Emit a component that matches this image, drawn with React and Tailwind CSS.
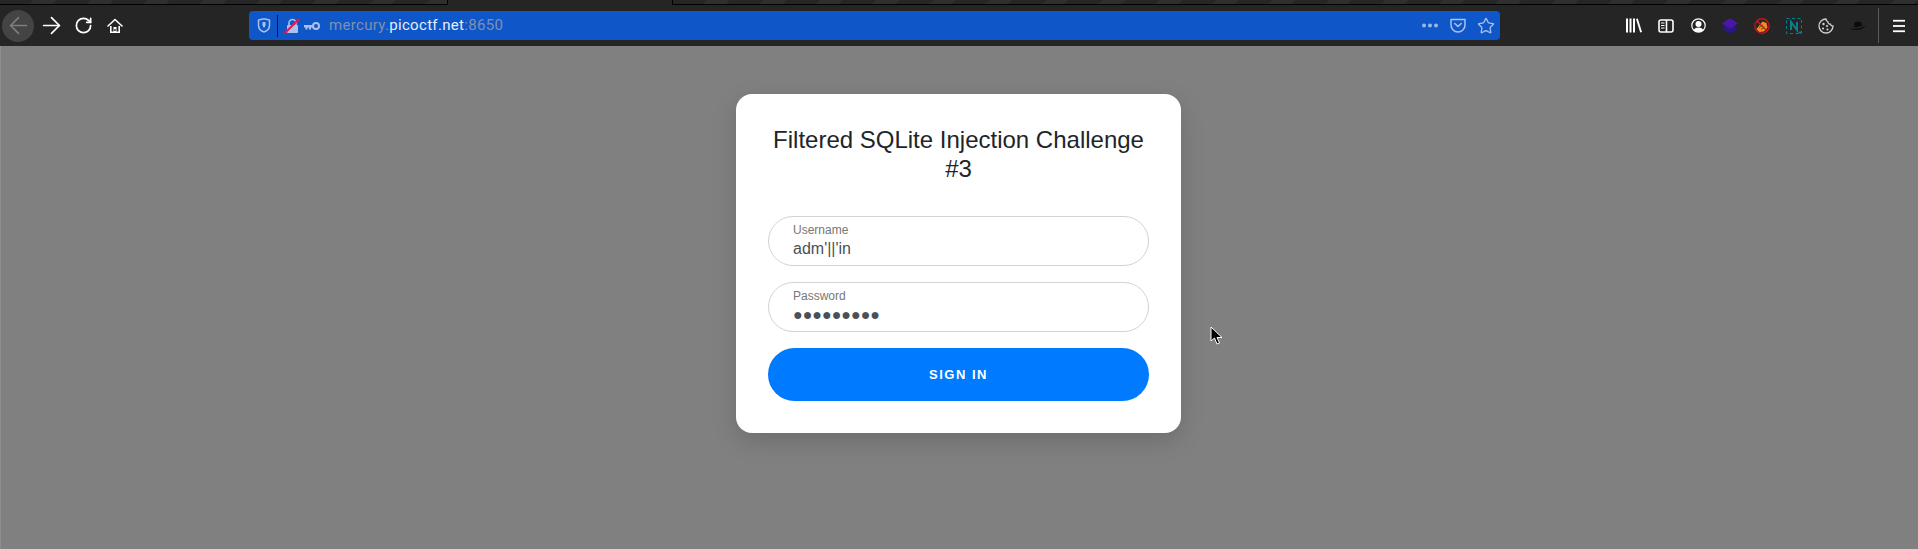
import React from 'react';
import { ArrowLeft, ArrowRight, RotateCw, Star, Menu } from 'lucide-react';

function ToolbarIcon({ children }) {
  return <div className="flex h-8 w-8 items-center justify-center">{children}</div>;
}

function Home() {
  return (
    <svg width="16" height="16" viewBox="0 0 16 16" fill="none">
      <path d="M1 8 8 1.500 15 8" stroke="#fff" strokeWidth="1.600" strokeLinecap="round" strokeLinejoin="round" />
      <path d="M3.800 8v6.200h8.400V8" stroke="#fff" strokeWidth="1.600" />
      <path d="M6.500 14.500V9h3v5.500z" fill="#fff" />
      <rect x="7.300" y="11" width="1.400" height="2" fill="#252525" />
    </svg>
  );
}

function Shield() {
  return (
    <svg width="14" height="15" viewBox="0 0 14 15" fill="none">
      <path d="M1.500 2.200C3.500 1.400 5.200 1 7 1s3.500.4 5.500 1.200v5C12.500 10.500 10 13 7 14 4 13 1.500 10.500 1.500 7.200z" stroke="#a9c1ec" strokeWidth="1.500" />
      <path d="M5.500 4h3v3.500L7 10 5.500 7.500z" fill="#a9c1ec" />
    </svg>
  );
}

function LockBroken() {
  return (
    <svg width="16" height="16" viewBox="0 0 16 16" fill="none">
      <path d="M5 7V5a3.500 3.500 0 0 1 7 0v2" stroke="#a9c1ec" strokeWidth="1.600" />
      <rect x="3" y="7" width="11" height="8" rx="1" fill="#a9c1ec" />
      <path d="M.5 15.500 15 1" stroke="#e8174e" strokeWidth="2" />
    </svg>
  );
}

function KeyIcon() {
  return (
    <svg width="16" height="10" viewBox="0 0 16 10" fill="none">
      <circle cx="12" cy="5" r="3" stroke="#a9c1ec" strokeWidth="2" />
      <path d="M9 4H0v2.500h1.500V8.500h2V6.500h1.500V8.500h2V6.500H9z" fill="#a9c1ec" />
    </svg>
  );
}

function Dots() {
  return (
    <svg width="16" height="5" viewBox="0 0 16 5" fill="#9db6e6">
      <circle cx="2" cy="2.500" r="2" />
      <circle cx="8" cy="2.500" r="2" />
      <circle cx="14" cy="2.500" r="2" />
    </svg>
  );
}

function Pocket() {
  return (
    <svg width="16" height="15" viewBox="0 0 16 15" fill="none">
      <path d="M1 1.500h14v5.500a7 7 0 0 1-14 0z" stroke="#a9c1ec" strokeWidth="1.500" strokeLinejoin="round" />
      <path d="M4.800 5.500 8 8.500l3.200-3" stroke="#a9c1ec" strokeWidth="1.600" strokeLinecap="round" strokeLinejoin="round" />
    </svg>
  );
}

function Library() {
  return (
    <svg width="16" height="15" viewBox="0 0 16 15" fill="#fff">
      <rect x="0" y="0.500" width="2" height="14" />
      <rect x="3.500" y="0.500" width="2" height="14" />
      <rect x="7" y="0.500" width="2" height="14" />
      <path d="M10 1l1.800-.5L16 14l-1.800.5z" />
    </svg>
  );
}

function Sidebar() {
  return (
    <svg width="16" height="14" viewBox="0 0 16 14" fill="none">
      <rect x="1" y="1" width="14" height="12" rx="2" stroke="#fff" strokeWidth="1.600" />
      <path d="M8.500 1v12" stroke="#fff" strokeWidth="1.600" />
      <path d="M3 4h3.500M3 6.500h3.500M3 9h3.500" stroke="#fff" strokeWidth="1.200" />
    </svg>
  );
}

function Profile() {
  return (
    <svg width="15" height="15" viewBox="0 0 15 15" fill="none">
      <circle cx="7.500" cy="7.500" r="6.700" stroke="#fff" strokeWidth="1.200" />
      <circle cx="7.500" cy="6" r="3" fill="#fff" />
      <path d="M2.800 12c1-2 2.800-2.600 4.700-2.600s3.700.6 4.700 2.600c-1.300 1.300-3 2-4.700 2s-3.400-.7-4.700-2z" fill="#fff" />
    </svg>
  );
}

function Layers() {
  return (
    <svg width="16" height="16" viewBox="0 0 16 16">
      <path d="M8 5 16 10.500 8 16 0 10.500z" fill="#2b1780" />
      <path d="M8 0 16 5.500 8 11 0 5.500z" fill="#4a16ac" />
    </svg>
  );
}

function BlockedAddon() {
  return (
    <svg width="16" height="16" viewBox="0 0 16 16" fill="none">
      <path d="M2.500 11 8.500 3.500l4 1.500 1 4.500-3.500 4-5 .5z" fill="#ee8f22" />
      <path d="M5 9.500 9 7M7 11.500l3.500-2.500" stroke="#7a4a12" />
      <circle cx="8" cy="8" r="7.200" stroke="#c5141c" strokeWidth="1.400" />
      <path d="M3 3l10 10" stroke="#d5141c" strokeWidth="1.400" />
    </svg>
  );
}

function NAddon() {
  return (
    <svg width="16" height="16" viewBox="0 0 16 16" fill="none">
      <rect x="0.500" y="0.500" width="15" height="15" stroke="#087f8c" strokeDasharray="3 2.500" />
      <path d="M5 12V4l6 8V4" stroke="#087f8c" strokeWidth="2" />
      <path d="M12.500 14.500h3M14 13v3" stroke="#087f8c" />
    </svg>
  );
}

function Cookie() {
  return (
    <svg width="16" height="16" viewBox="0 0 16 16" fill="none">
      <path d="M8 1a7 7 0 1 0 7 7c-1.300.2-2.300-.5-2.500-1.800C11 6.300 9.700 5 9.800 3.600 8.800 3.300 8 2.300 8 1z" stroke="#d0d0d0" strokeWidth="1.300" />
      <circle cx="5.500" cy="6" r="1.200" fill="#d0d0d0" />
      <circle cx="9" cy="8" r="1.100" fill="#d0d0d0" />
      <circle cx="5" cy="10.500" r="1.100" fill="#d0d0d0" />
      <circle cx="9.500" cy="11.500" r="1.100" fill="#d0d0d0" />
    </svg>
  );
}

function Hat() {
  return (
    <svg width="16" height="10" viewBox="0 0 16 10" fill="none">
      <path d="M4 6.500 4.800 1.200c2-.5 4.500-.5 6.400 0L12 5z" fill="#0b0b0b" />
      <path d="M.5 7.500C3 8.500 11 8 15.500 4.500 13.500 9 4 10.500.5 7.500z" fill="#0b0b0b" />
    </svg>
  );
}

function Pointer() {
  return (
    <svg width="13" height="19" viewBox="0 0 13 19" className="absolute left-[1210px] top-[326px]">
      <path d="M1 1v14l3.500-3 2.500 6 2.500-1-2.500-5.500H12z" fill="#000" stroke="#fff" strokeWidth="1" />
    </svg>
  );
}

function Field({ label, children }) {
  return (
    <div className="flex h-[50px] flex-col rounded-full border border-[#ced4da] bg-white pl-6 pr-6 pt-[6px]">
      <label className="text-xs leading-[15px] text-[#777]">{label}</label>
      {children}
    </div>
  );
}

const tabPattern = 'bg-[repeating-linear-gradient(135deg,#262626_0px,#262626_24px,#2f2f2f_24px,#2f2f2f_40px)]';

export default function App() {
  return (
    <div className="relative flex h-[549px] w-[1918px] flex-col overflow-hidden bg-[#808080] font-['Liberation_Sans',sans-serif]">
      {/* strip of the window above the browser chrome */}
      <div className="flex h-[5px] bg-[#252525]">
        <div className={`w-[448px] border-b border-r border-black ${tabPattern}`} />
        <div className="w-[224px]" />
        <div className={`flex-1 border-b border-l border-black ${tabPattern}`} />
      </div>

      <div className="flex h-[41px] items-center bg-[#252525]">
        <div className="flex items-center pl-[2px]">
          <div className="flex h-8 w-8 items-center justify-center rounded-full bg-[#444]">
            <ArrowLeft size={27} strokeWidth={1.500} className="text-[#7d7d7d]" />
          </div>
          <div className="ml-[1px]">
            <ToolbarIcon><ArrowRight size={27} strokeWidth={1.500} className="text-white" /></ToolbarIcon>
          </div>
          <ToolbarIcon><RotateCw size={19} strokeWidth={2.200} className="text-white" /></ToolbarIcon>
          <ToolbarIcon><Home /></ToolbarIcon>
        </div>

        <div className="ml-[118px] flex h-[29px] w-[1251px] items-center rounded-[4px] bg-[#0f56c8]">
          <div className="flex w-[28px] justify-center pl-[1px]"><Shield /></div>
          <div className="h-[22px] w-px bg-[#0a1b3c]" />
          <div className="ml-[6px]"><LockBroken /></div>
          <div className="ml-[4px]"><KeyIcon /></div>
          <div className="ml-[9px] font-['Roboto',sans-serif] text-[15px] tracking-[0.320px] text-[#8090b0]">
            mercury.<span className="text-[#e6edfa]">picoctf.net</span>:8650
          </div>
          <div className="ml-auto flex items-center pr-[5px]">
            <Dots />
            <div className="ml-[12px]"><Pocket /></div>
            <Star size={18} strokeWidth={1.800} className="ml-[11px] text-[#a9c1ec]" />
          </div>
        </div>

        <div className="ml-[118px] flex items-center">
          <ToolbarIcon><Library /></ToolbarIcon>
          <ToolbarIcon><Sidebar /></ToolbarIcon>
          <ToolbarIcon><Profile /></ToolbarIcon>
          <ToolbarIcon><Layers /></ToolbarIcon>
          <ToolbarIcon><BlockedAddon /></ToolbarIcon>
          <ToolbarIcon><NAddon /></ToolbarIcon>
          <ToolbarIcon><Cookie /></ToolbarIcon>
          <ToolbarIcon><Hat /></ToolbarIcon>
          <div className="ml-[4px] h-[35px] w-px bg-[#5a5a5a]" />
          <div className="ml-[4px]">
            <ToolbarIcon><Menu size={18} strokeWidth={2.400} strokeLinecap="butt" className="text-white" /></ToolbarIcon>
          </div>
        </div>
      </div>

      <div className="flex flex-1 justify-center border-l border-[#8e8e8e] pr-[2px] pt-[48px]">
        <div className="h-[339px] w-[445px] rounded-[16px] bg-white px-8 pt-[31px] shadow-[0_8px_24px_rgba(0,0,0,0.15)]">
          <h1 className="text-center text-2xl leading-[29px] text-[#212529]">Filtered SQLite Injection Challenge #3</h1>
          <div className="mt-[33px] flex flex-col gap-4">
            <Field label="Username">
              <div className="mt-[1px] text-base leading-[20px] text-[#495057]">adm'||'in</div>
            </Field>
            <Field label="Password">
              <div className="mt-[1px] text-base leading-[20px] text-[#495057]">●●●●●●●●●</div>
            </Field>
            <button className="h-[53px] rounded-full bg-[#007bff] text-[13px] font-bold tracking-[1.500px] text-white">
              SIGN IN
            </button>
          </div>
        </div>
      </div>

      <Pointer />
    </div>
  );
}
